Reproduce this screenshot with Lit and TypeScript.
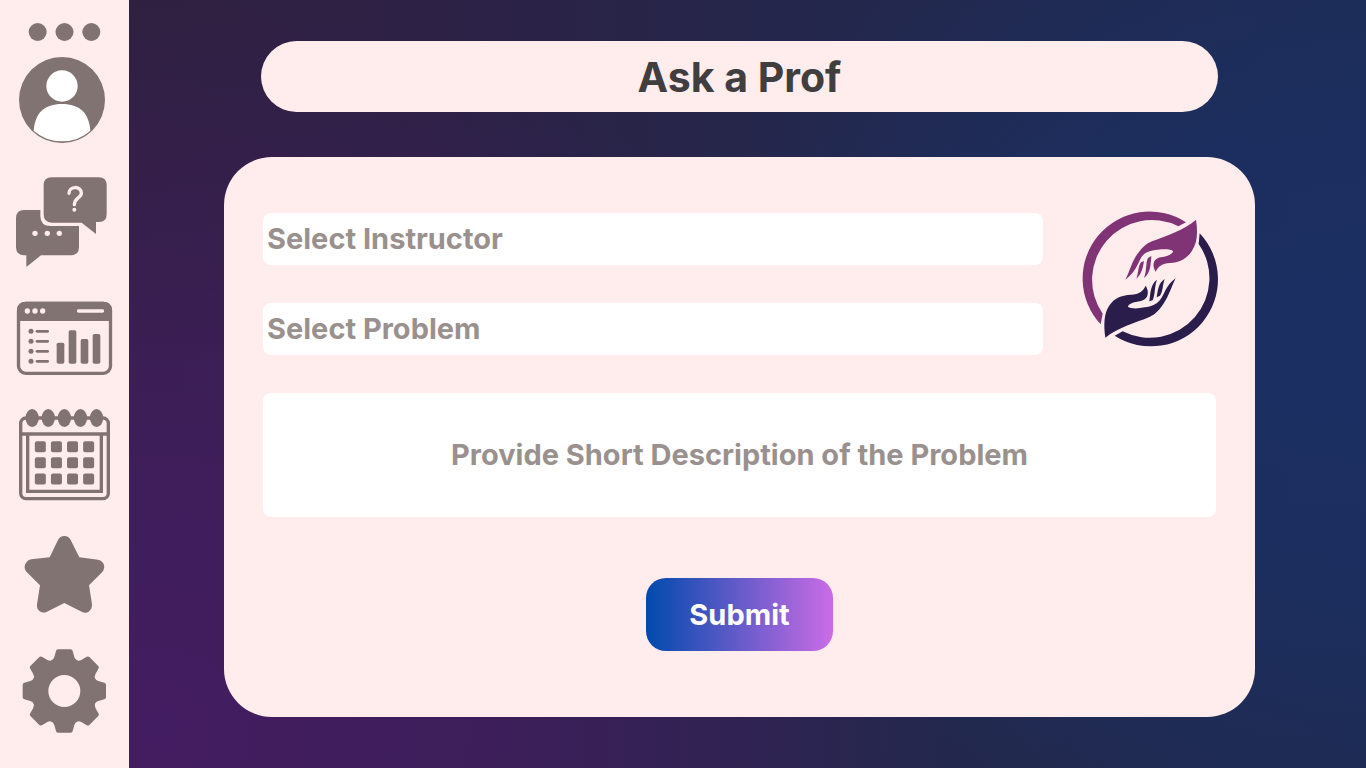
import { LitElement, html, css, svg } from "lit";
import { customElement, state } from "lit/decorators.js";

const range = (n: number) => Array.from({ length: n }, (_, i) => i);

const chatIcon = html`<svg class="icon" viewBox="0 36 387 270" aria-hidden="true">
  <path d="M73 135H218Q237 150 237 180V246Q237 271 212 271H123L79 306V271H73Q48 271 48 246V160Q48 135 73 135Z" />
  <path class="cut" d="M121 125V152Q121 183 152 183H245V125Z" />
  <path d="M155 37H296Q320 37 320 61V148Q320 171 297 171H288V207L245 173H155Q131 173 131 148V61Q131 37 155 37Z" />
  <circle class="cut" cx="105" cy="205" r="8" /><circle class="cut" cx="142" cy="205" r="8" /><circle class="cut" cx="178" cy="205" r="8" />
  <path class="cut-line" d="M207 85C207 62 244 62 244 84C244 100 223 98 223 119" />
  <circle class="cut" cx="223" cy="134" r="6" />
</svg>`;

const reportIcon = html`<svg class="icon" viewBox="0 33 387 222" aria-hidden="true">
  <rect class="line" x="55.5" y="40" width="276" height="210" rx="22" />
  <path d="M51 93V61Q51 35 77 35H310Q336 35 336 61V93Z" />
  <circle class="cut" cx="82" cy="63" r="8" /><circle class="cut" cx="105" cy="63" r="8" /><circle class="cut" cx="128" cy="63" r="8" />
  <rect class="cut" x="231" y="58" width="81" height="10" rx="4" />
  ${[124, 154, 184, 214].map((y) => svg`<circle cx="93" cy=${y} r="7.5" /><rect x="107" y=${y - 4} width="40" height="8" rx="4" />`)}
  <rect x="170" y="158" width="23" height="63" rx="5" /><rect x="206" y="121" width="23" height="100" rx="5" />
  <rect x="242" y="147" width="23" height="74" rx="5" /><rect x="278" y="132" width="23" height="89" rx="5" />
</svg>`;

const calendarIcon = html`<svg class="icon" viewBox="0 27 387 276" aria-hidden="true">
  <rect class="line" x="62" y="54" width="263" height="242" rx="16" />
  <path class="line" d="M61 102H326M83 102V274H304V102" />
  ${range(5).map((i) => svg`<ellipse cx=${96.5 + i * 48.3} cy="54" rx="20" ry="27" />`)}
  ${range(12).map((i) => svg`<rect x=${104.5 + (i % 4) * 48.3} y=${123.5 + Math.floor(i / 4) * 48.5} width="33" height="33" rx="6" />`)}
</svg>`;

const starIcon = html`<svg class="icon" viewBox="0 30 387 234" aria-hidden="true">
  <path d="M174 45Q180 33 193 33Q206 33 212 45L238 97L294 104Q306 106 311 117Q316 130 307 141L267 181L276 238Q277 252 266 260Q256 266 245 260L193 234L141 260Q129 266 119 259Q109 251 111 238L120 181L80 141Q70 130 76 117Q82 105 94 103L149 97Z" />
</svg>`;

const gearIcon = html`<svg class="icon" viewBox="0 366 387 261" aria-hidden="true">
  <circle cx="193" cy="498" r="95" />
  ${range(8).map((i) => svg`<path transform=${`rotate(${i * 45} 193 498)`}
    d="M174 373H212Q217 373 218 378L223 396Q225 404 234 408L193 498L152 408Q161 404 163 396L168 378Q169 373 174 373Z" />`)}
  <circle class="cut" cx="193" cy="498" r="48" />
</svg>`;

const logo = html`<svg class="logo" viewBox="42 39 396 408" role="img" aria-label="Helping hands">
  <path class="plum" d="M348 67A201 201 0 0 0 92 373L98 341A179 179 0 0 1 325 79Z" />
  <path class="navy" d="M389 100A201 201 0 0 1 134 407L158 394A179 179 0 0 0 386 132Z" />
  <path class="plum" d="M378 59C384 96 382 129 366 152C350 177 330 187 300 189C276 191 266 198 257 215C248 201 248 185 259 177C270 169 284 173 298 165C306 161 310 156 309 153C303 147 285 147 263 149C238 151 222 158 213 173C203 193 194 218 166 239C180 213 186 182 204 160C216 143 228 131 246 124C292 106 341 91 378 59Z" />
  <path class="plum" d="M222 183C219 201 216 222 199 236C206 216 204 199 213 187ZM244 168C242 192 242 219 222 234C231 212 226 190 234 174Z" />
  <path class="navy" d="M106 413C101 376 101 339 119 315C134 294 152 286 183 284C207 282 219 275 227 257C236 271 236 288 225 297C213 306 195 304 182 311C176 314 173 318 174 320C182 327 205 326 224 322C245 319 259 314 270 300C284 283 287 256 317 235C304 261 296 289 280 312C267 330 258 342 240 350C193 370 145 381 106 413Z" />
  <path class="navy" d="M261 239C253 259 256 283 248 301L238 304C241 279 242 252 261 239ZM284 237C277 257 279 274 270 287L260 292C264 270 265 249 284 237Z" />
</svg>`;

@customElement("app-root")
export class AppRoot extends LitElement {
  @state() private instructor = "";
  @state() private problem = "";

  static styles = css`
    :host {
      display: flex;
      min-height: 100vh;
      font-family: Inter, "Liberation Sans", sans-serif;
      font-weight: 700;
      --blush: #ffecec;
      --taupe: #817371;
      --muted: #9a918f;
      background:
        radial-gradient(ellipse 58% 95% at 12% 95%, #431d61 0%, #431d61cc 35%, #431d6100 100%),
        radial-gradient(ellipse 48% 65% at 98% 45%, #1b2f62 0%, #1b2f62cc 45%, #1b2f6200 100%),
        linear-gradient(90deg, #2f2040 10%, #2d2145 30%, #24274c 60%, #1e2b51 100%);
    }
    * { box-sizing: border-box; }
    .sidebar {
      flex: 0 0 129px;
      display: flex;
      flex-direction: column;
      gap: 34px;
      padding: 23px 0 34px;
      background: var(--blush);
    }
    .top { display: flex; flex-direction: column; gap: 16px; }
    .nav { display: flex; flex-direction: column; gap: 34px; }
    .item {
      display: block;
      width: 100%;
      padding: 0;
      border: 0;
      background: none;
      cursor: pointer;
    }
    .icon { display: block; width: 100%; fill: var(--taupe); overflow: visible; }
    .cut { fill: var(--blush); }
    .white { fill: #fff; }
    .line { fill: none; stroke: var(--taupe); stroke-width: 10; }
    .cut-line { fill: none; stroke: var(--blush); stroke-width: 10; stroke-linecap: round; }
    .main {
      flex: 1;
      min-width: 0;
      display: flex;
      flex-direction: column;
      gap: 45px;
      padding: 41px 111px 51px 95px;
    }
    .title {
      margin: 0 37px;
      padding: 12px 24px 11px;
      border-radius: 36px;
      background: var(--blush);
      color: #403e3e;
      font-size: 41px;
      line-height: 48px;
      text-align: center;
    }
    .card {
      flex: 1;
      display: flex;
      flex-direction: column;
      gap: 38px;
      padding: 56px 39px 66px;
      border-radius: 48px;
      background: var(--blush);
    }
    .row { display: grid; grid-template-columns: 1fr 132px; gap: 41px; align-items: start; }
    .fields { display: grid; gap: 38px; }
    .field {
      display: block;
      width: 100%;
      border: 0;
      border-radius: 8px;
      background: #fff;
      color: var(--muted);
      font: inherit;
      font-size: 29px;
      line-height: 34px;
    }
    .select { appearance: none; height: 52px; padding: 0 4px; cursor: pointer; }
    .area {
      height: 124px;
      padding: 45px 16px;
      text-align: center;
      resize: none;
    }
    .area::placeholder { color: var(--muted); opacity: 1; }
    .submit {
      align-self: center;
      margin-top: 23px;
      padding: 20px 43px 19px;
      border: 0;
      border-radius: 20px;
      background: linear-gradient(90deg, #004aad, #cb6ce6);
      color: #fff;
      font: inherit;
      font-size: 29px;
      line-height: 34px;
      cursor: pointer;
    }
    .logo { display: block; width: 100%; overflow: visible; }
    .plum { fill: #803475; }
    .navy { fill: #2b1d4b; }
  `;

  render() {
    return html`
      <aside class="sidebar">
        <div class="top">
          <button class="item" aria-label="Menu">
            <svg class="icon" viewBox="0 69 387 54" aria-hidden="true">
              <circle cx="113" cy="96" r="27" /><circle cx="193.5" cy="96" r="27" /><circle cx="274" cy="96" r="27" />
            </svg>
          </button>
          <a class="item" href="#profile" aria-label="Profile">
            <svg class="icon" viewBox="0 171 387 258" aria-hidden="true">
              <circle cx="186" cy="300" r="129" />
              <circle class="white" cx="186" cy="258" r="47" />
              <path class="white" d="M101 392C105 340 132 312 186 312C240 312 267 340 271 392Q236 424 186 424Q137 424 101 392Z" />
            </svg>
          </a>
        </div>
        <nav class="nav" aria-label="Main">
          <a class="item" href="#questions" aria-label="Questions">${chatIcon}</a>
          <a class="item" href="#reports" aria-label="Reports">${reportIcon}</a>
          <a class="item" href="#calendar" aria-label="Calendar">${calendarIcon}</a>
          <a class="item" href="#favorites" aria-label="Favorites">${starIcon}</a>
          <a class="item" href="#settings" aria-label="Settings">${gearIcon}</a>
        </nav>
      </aside>
      <main class="main">
        <h1 class="title">Ask a Prof</h1>
        <form class="card" @submit=${(e: Event) => e.preventDefault()}>
          <div class="row">
            <div class="fields">
              <select class="field select" aria-label="Instructor" .value=${this.instructor}
                @change=${(e: Event) => (this.instructor = (e.target as HTMLSelectElement).value)}>
                <option value="">Select Instructor</option>
              </select>
              <select class="field select" aria-label="Problem" .value=${this.problem}
                @change=${(e: Event) => (this.problem = (e.target as HTMLSelectElement).value)}>
                <option value="">Select Problem</option>
              </select>
            </div>
            ${logo}
          </div>
          <textarea class="field area" aria-label="Description" placeholder="Provide Short Description of the Problem"></textarea>
          <button class="submit" type="submit">Submit</button>
        </form>
      </main>
    `;
  }
}
